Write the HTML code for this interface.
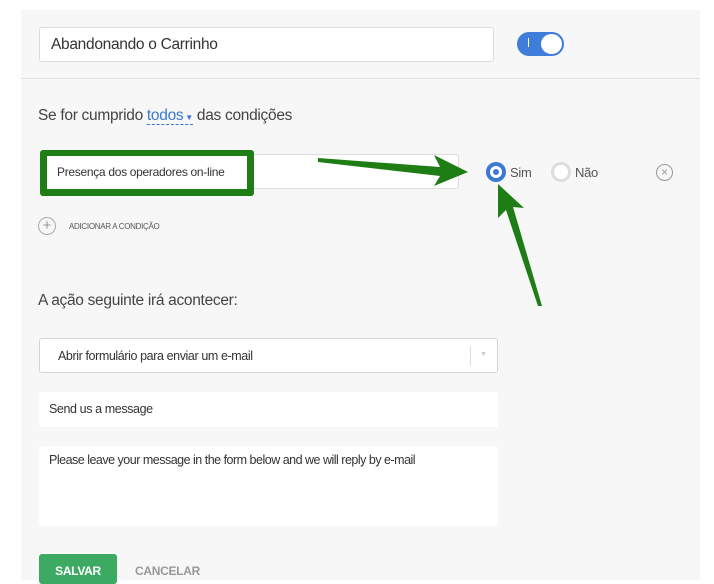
<!DOCTYPE html>
<html><head><style>
*{box-sizing:border-box;margin:0;padding:0}
body{width:714px;height:578px;background:#fff;font-family:"Liberation Sans",sans-serif;position:relative;overflow:hidden;color:#333}
.a{position:absolute;white-space:nowrap}
.panel{left:21px;top:10px;width:679px;height:570px;background:#f7f7f7}
.inp{background:#fff;border:1px solid #ddd;border-radius:3px}
</style></head><body>
<div class="a panel"></div>
<div class="a inp" style="left:39px;top:27px;width:455px;height:35px;font-size:15.5px;padding:8px 11px;color:#333;letter-spacing:-0.3px">Abandonando o Carrinho</div>
<div class="a" style="left:517px;top:32px;width:47px;height:24px;border-radius:12px;background:#3f7ddb"></div>
<div class="a" style="left:528px;top:38px;width:1px;height:9px;background:#fff"></div>
<div class="a" style="left:541px;top:34px;width:21px;height:20px;border-radius:50%;background:#fff"></div>
<div class="a" style="left:21px;top:78px;width:679px;height:1px;background:#e2e2e2"></div>
<div class="a" style="left:38px;top:107px;font-size:15.5px;color:#444;letter-spacing:-0.3px">Se for cumprido <span style="color:#3a78d2;border-bottom:1px dashed #3a78d2">todos<span style="font-size:8px"> ▼</span></span> das condições</div>
<div class="a inp" style="left:245px;top:154px;width:214px;height:35px"></div>
<div class="a" style="left:40px;top:150px;width:214px;height:46px;background:#1e7d14;border-radius:3px"></div>
<div class="a" style="left:47px;top:156px;width:200px;height:33px;background:#fff;font-size:12px;padding:9px 10px;color:#333;letter-spacing:-0.3px">Presença dos operadores on-line</div>
<div class="a" style="left:486px;top:162px;width:20px;height:20px;border-radius:50%;background:#3a78d2"></div>
<div class="a" style="left:490px;top:166px;width:12px;height:12px;border-radius:50%;background:#fff"></div>
<div class="a" style="left:493px;top:169px;width:6px;height:6px;border-radius:50%;background:#3a78d2"></div>
<div class="a" style="left:510px;top:165px;font-size:13px;color:#555;letter-spacing:-0.3px">Sim</div>
<div class="a" style="left:551px;top:162px;width:20px;height:20px;border-radius:50%;border:3px solid #ddd;background:#fff"></div>
<div class="a" style="left:575px;top:165px;font-size:13px;color:#555;letter-spacing:-0.3px">Não</div>
<div class="a" style="left:656px;top:164px;width:17px;height:17px;border-radius:50%;border:1px solid #999;color:#999;font-size:12px;text-align:center;line-height:15px">×</div>
<div class="a" style="left:38px;top:217px;width:18px;height:18px;border-radius:50%;border:1px solid #aaa;color:#999;font-size:15px;text-align:center;line-height:16px">+</div>
<div class="a" style="left:69px;top:222px;font-size:8px;color:#555;letter-spacing:-0.3px">ADICIONAR A CONDIÇÃO</div>
<svg class="a" style="left:0;top:0" width="714" height="578">
<polygon fill="#1e7d14" points="318,158 440,167 434,155 468,172 434,186 440,176 318,162"/>
<polygon fill="#1e7d14" points="538,306 506,210 498,218 498,184 524,208 513,207 542,306"/>
</svg>
<div class="a" style="left:38px;top:292px;font-size:15.5px;color:#444;letter-spacing:-0.3px">A ação seguinte irá acontecer:</div>
<div class="a inp" style="left:39px;top:338px;width:459px;height:35px;border-color:#d5d5d5;font-size:12.5px;padding:10px 18px;color:#333;letter-spacing:-0.4px">Abrir formulário para enviar um e-mail</div>
<div class="a" style="left:470px;top:346px;width:1px;height:20px;background:#ddd"></div>
<div class="a" style="left:480px;top:351px;font-size:7px;color:#ccc">▼</div>
<div class="a" style="left:39px;top:392px;width:459px;height:35px;background:#fff;border-radius:3px;font-size:12.5px;padding:10px 10px;color:#333;letter-spacing:-0.4px">Send us a message</div>
<div class="a" style="left:39px;top:446px;width:459px;height:80px;background:#fff;border-radius:3px;font-size:12.5px;padding:7px 10px;color:#333;letter-spacing:-0.5px">Please leave your message in the form below and we will reply by e-mail</div>
<div class="a" style="left:39px;top:554px;width:78px;height:30px;background:#3daa63;border-radius:3px;color:#fff;font-size:12px;font-weight:bold;text-align:center;padding-top:10px;letter-spacing:-0.3px">SALVAR</div>
<div class="a" style="left:135px;top:564px;font-size:12px;font-weight:bold;color:#999;letter-spacing:-0.3px">CANCELAR</div>
</body></html>
